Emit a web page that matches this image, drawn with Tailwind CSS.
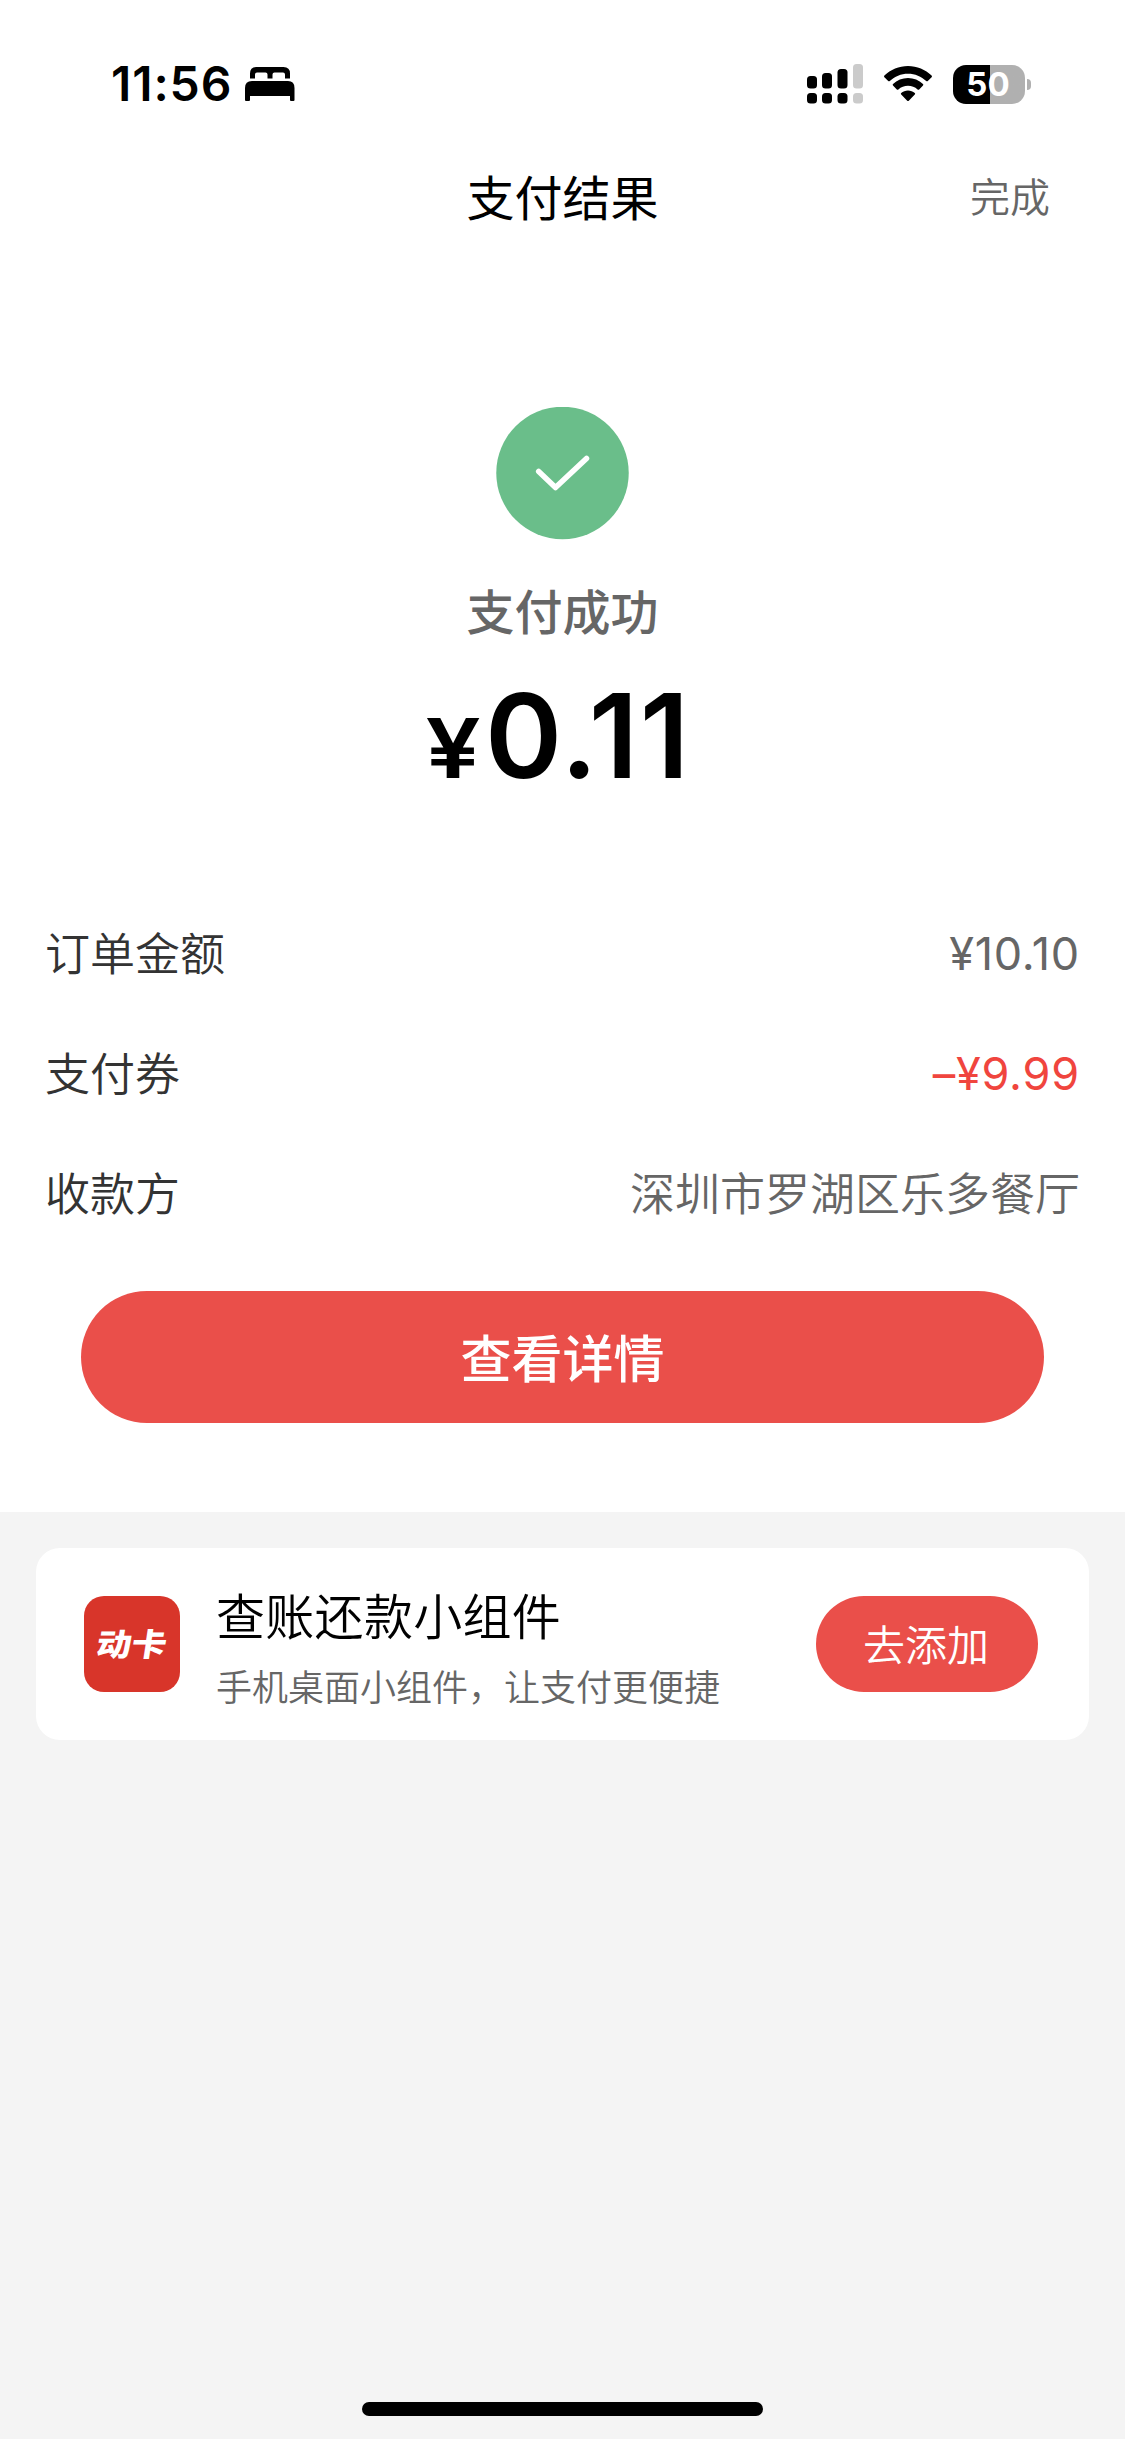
<!DOCTYPE html>
<html lang="zh-CN">
<head>
<meta charset="utf-8">
<meta name="viewport" content="width=device-width, initial-scale=1">
<title>支付结果</title>
<script src="https://cdn.jsdelivr.net/npm/@tailwindcss/browser@4"></script>
</head>
<body class="bg-[#f4f4f4]">
<div class="flex h-[2439px] w-[1125px] flex-col overflow-hidden bg-[#f4f4f4] font-['Noto_Sans_CJK_SC',sans-serif] text-black">
  <main class="flex h-[1512px] shrink-0 flex-col bg-white">
    <!-- Status bar -->
    <div class="flex h-[132px] shrink-0 items-start justify-between pt-[60px] pr-[94px] pl-[111px]">
      <div class="flex h-12 items-center">
        <span class="w-[134px] font-['Inter',sans-serif] text-[48px] leading-[48px] font-semibold tracking-[0.9px] whitespace-nowrap">11:56</span>
        <svg class="h-[34px] w-[50px]" viewBox="0 0 50 34">
          <path d="M5 11.500V6.500Q5 0 11.500 0H38.500Q45 0 45 6.500V11.500H40V7.500Q40 5.500 38 5.500H29.500Q27.500 5.500 27.500 7.500V11.500H22.500V7.500Q22.500 5.500 20.500 5.500H12Q10 5.500 10 7.500V11.500Z"/>
          <path d="M0 33V21Q0 14 7 14H43Q49.500 14 49.500 21V33Q49.500 34 48.500 34H46Q45 34 45 33V29H5V33Q5 34 4 34H1Q0 34 0 33Z"/>
        </svg>
      </div>
      <div class="flex h-12 items-center">
        <svg class="mr-[20px] h-10 w-[57px]" viewBox="0 0 57 40">
          <g>
            <rect x="0" y="12" width="10" height="12.500" rx="3.500"/>
            <rect x="15" y="9" width="10" height="15.500" rx="3.500"/>
            <rect x="30.500" y="5" width="10" height="19.500" rx="3.500"/>
            <rect x="0" y="29" width="10" height="10.500" rx="3.500"/>
            <rect x="15" y="29" width="10" height="10.500" rx="3.500"/>
            <rect x="30.500" y="29" width="10" height="10.500" rx="3.500"/>
          </g>
          <g fill="#cbcbcb">
            <rect x="46" y="0" width="10" height="24.500" rx="3.500"/>
            <rect x="46" y="29" width="10" height="10.500" rx="3.500"/>
          </g>
        </svg>
        <svg class="mr-[21px] h-9 w-12" viewBox="0 0 48 36">
          <path d="M24 0C33 0 41.500 3.500 47.600 9.600Q48.300 10.400 47.600 11.200L43.800 15Q43 15.700 42.200 15C37.300 10.400 31 7.700 24 7.700S10.700 10.400 5.800 15Q5 15.700 4.200 15L.4 11.200Q-.3 10.400 .4 9.600C6.500 3.500 15 0 24 0Z"/>
          <path d="M24 12C29.700 12 35 14.200 39 18Q39.700 18.800 39 19.600L35.200 23.400Q34.400 24.100 33.600 23.400C31 21 27.600 19.700 24 19.700S17 21 14.400 23.400Q13.600 24.100 12.800 23.400L9 19.600Q8.300 18.800 9 18C13 14.200 18.300 12 24 12Z"/>
          <path d="M24 24.500C26.600 24.500 29 25.400 30.800 27Q31.600 27.800 30.800 28.600L24.800 34.700Q24 35.400 23.200 34.700L17.200 28.600Q16.400 27.800 17.200 27C19 25.400 21.400 24.500 24 24.500Z"/>
        </svg>
        <div class="flex h-[39px] w-[72px] items-center justify-center rounded-[13px] bg-linear-to-r from-black from-[36.500px] to-[#b0b0b0] to-[36.500px] pr-[2px] font-['Inter',sans-serif] text-[33px] leading-[39px] font-bold text-white">50</div>
        <div class="ml-[2px] h-[11px] w-[4px] rounded-r-full bg-[#b0b0b0]"></div>
      </div>
    </div>

    <!-- Navigation -->
    <header class="grid h-[132px] shrink-0 grid-cols-3 items-center px-[75px] pb-[6px]">
      <span></span>
      <h1 class="text-center text-[48px] leading-[60px] font-normal">支付结果</h1>
      <span class="text-right text-[40px] leading-[60px] font-[350] text-[#666]">完成</span>
    </header>

    <!-- Result -->
    <section class="flex flex-col items-center pt-[143px]">
      <svg class="h-[133px] w-[133px]" viewBox="0 0 133 133">
        <circle cx="66.500" cy="66" r="66.250" fill="#6abe8a"/>
        <path d="M42.700 64.500L59.500 80.500L90.500 51.500" fill="none" stroke="#fff" stroke-width="5.500" stroke-linecap="round" stroke-linejoin="round"/>
      </svg>
      <p class="mt-[39px] text-[48px] leading-[60px] font-medium text-[#666]">支付成功</p>
      <p class="mt-[27px] flex h-[140px] items-baseline font-['Inter',sans-serif] font-semibold whitespace-nowrap">
        <span class="mr-[4px] origin-right scale-x-[1.18] text-[83px] leading-[140px]">¥</span>
        <span class="text-[117px] leading-[140px] tracking-[1.5px]">0.11</span>
      </p>
    </section>

    <!-- Order details -->
    <dl class="mt-[88px] flex flex-col px-[45px] text-[45px] leading-[60px]">
      <div class="flex h-[120px] items-center justify-between">
        <dt class="pb-[4px] font-[350] text-[#333]">订单金额</dt>
        <dd class="font-['Inter',sans-serif] font-[380] tracking-[0.8px] text-[#666]">¥10.10</dd>
      </div>
      <div class="flex h-[120px] items-center justify-between">
        <dt class="pb-[4px] font-[350] text-[#333]">支付券</dt>
        <dd class="font-['Inter',sans-serif] font-[380] tracking-[0.8px] text-[#f0453e]">–¥9.99</dd>
      </div>
      <div class="flex h-[120px] items-center justify-between">
        <dt class="pb-[4px] font-[350] text-[#333]">收款方</dt>
        <dd class="pb-[4px] font-[350] text-[#666]">深圳市罗湖区乐多餐厅</dd>
      </div>
    </dl>

    <button class="mx-[81px] mt-[37px] h-[132px] shrink-0 rounded-full bg-[#ea4f4a] pb-[3px] text-[51px] leading-[60px] font-medium text-white">查看详情</button>
  </main>

  <!-- Widget promotion -->
  <section class="mx-9 mt-9 flex h-48 items-center rounded-[24px] bg-white pr-[51px] pl-12">
    <div class="flex h-24 w-24 shrink-0 items-center justify-center rounded-[20px] bg-[#d8352a] pb-[4px]">
      <span class="-skew-x-8 scale-y-90 text-[35px] leading-[40px] font-black whitespace-nowrap text-white">动卡</span>
    </div>
    <div class="ml-9 flex-1 pt-[9px]">
      <h2 class="text-[49px] leading-[72px] font-[350] tracking-[0.300px]">查账还款小组件</h2>
      <p class="text-[36px] leading-[70px] font-[350] text-[#666]">手机桌面小组件，让支付更便捷</p>
    </div>
    <button class="h-24 w-[222px] shrink-0 rounded-full bg-[#ea4f4a] pr-[2px] pb-[3px] text-[42px] leading-[60px] font-[350] text-white">去添加</button>
  </section>

  <!-- Home indicator -->
  <div class="mx-auto mt-auto mb-[23px] h-[14px] w-[401px] rounded-full bg-black"></div>
</div>
</body>
</html>
